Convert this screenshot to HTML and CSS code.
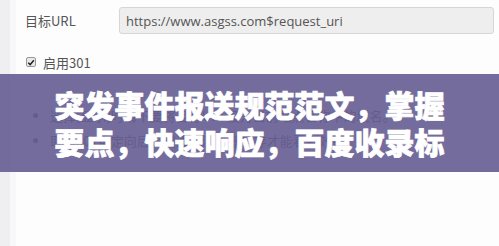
FILE: index.html
```html
<!DOCTYPE html>
<html lang="zh-CN">
<head>
<meta charset="utf-8">
<title>301重定向</title>
<link rel="stylesheet" href="styles.css">
</head>
<body>
<div class="page">
  <aside class="sidebar"></aside>
  <main class="content">
    <div class="form-row">
      <label class="label">目标URL</label>
      <div class="input">https://www.asgss.com$request_uri</div>
    </div>
    <div class="check-row">
      <span class="checkbox"><svg viewBox="0 0 10 10" width="9" height="9"><path d="M1.5 5.2 L4 7.6 L8.6 2.2" fill="none" stroke="#222" stroke-width="1.8"/></svg></span>
      <span class="check-label">启用301</span>
    </div>
    <ul class="notes">
      <li>选择[显示]时请不要将目标URL设为当前站点名称中的域名。</li>
      <li>取消301重定向后，需清除浏览器缓存才能看到效果。</li>
    </ul>
  </main>
  <div class="banner">
    <h1 class="banner-title">突发事件报送规范范文，掌握要点，快速响应，百度收录标</h1>
  </div>
</div>
</body>
</html>
```

FILE: styles.css
```css
html, body {
  margin: 0;
  padding: 0;
  background: #fdfdfd;
}
body {
  width: 499px;
  height: 246px;
  overflow: hidden;
  font-family: "Open Sans", "Noto Sans CJK SC", sans-serif;
}
.page {
  position: relative;
  display: flex;
  height: 246px;
}
.sidebar {
  width: 10px;
  flex: none;
  background: #efeef0;
  border-right: 6px solid #f8f7f9;
}
.content {
  flex: 1;
  padding: 7px 5px 0 9px;
}
.form-row {
  display: flex;
  align-items: center;
  height: 27px;
}
.label {
  width: 94px;
  font-size: 13px;
  color: #555;
  font-family: "Noto Sans CJK SC", sans-serif;
}
.input {
  box-sizing: border-box;
  width: 375px;
  height: 27px;
  display: flex;
  align-items: center;
  padding-left: 6px;
  background: #eeeeee;
  border: 1px solid #d6d6d6;
  border-radius: 3px;
  font-size: 13px;
  color: #555;
}
.check-row {
  display: flex;
  align-items: center;
  gap: 7px;
  margin-top: 21px;
  padding-left: 1px;
  height: 14px;
}
.checkbox {
  box-sizing: border-box;
  width: 10px;
  height: 10px;
  border: 1px solid #999;
  border-radius: 2px;
  background: #e8e8e8;
  display: flex;
  align-items: center;
  justify-content: center;
}
.check-label {
  font-size: 13px;
  color: #555;
  font-family: "Noto Sans CJK SC", sans-serif;
}
.notes {
  margin: 34px 0 0;
  padding: 0 0 0 25px;
  font-family: "Noto Sans CJK SC", sans-serif;
  font-size: 13px;
  line-height: 25px;
  color: #333;
}
.banner {
  position: absolute;
  left: 0;
  top: 74px;
  width: 499px;
  height: 98px;
  background: rgba(104, 95, 148, 0.92);
  display: flex;
  align-items: center;
  justify-content: center;
}
.banner-title {
  margin: 0;
  width: 392px;
  font-family: "Noto Sans CJK SC", sans-serif;
  font-weight: 900;
  font-size: 30px;
  line-height: 37px;
  color: #fff;
  -webkit-text-stroke: 0.7px #fff;
  text-align: center;
}
```
